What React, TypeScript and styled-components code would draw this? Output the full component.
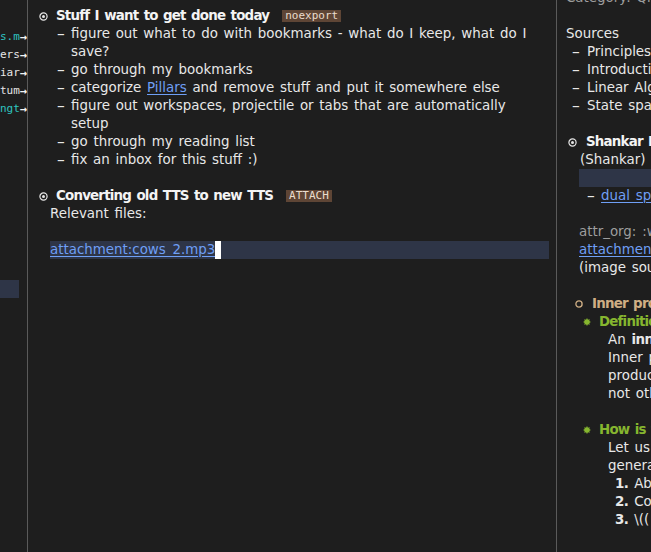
import React from 'react';
import styled, { createGlobalStyle } from 'styled-components';

const GlobalStyle = createGlobalStyle`
  *, *::before, *::after { box-sizing: border-box; }
  html, body { margin: 0; padding: 0; background: #1e1e1e; }
  body { overflow: hidden; }
`;

const Frame = styled.div`
  display: flex;
  width: 651px;
  height: 552px;
  background: #1e1e1e;
  color: #e8e8e8;
  font-family: "DejaVu Sans", "Noto Sans", sans-serif;
  font-size: 13.4px;
  word-spacing: 1.5px;
  overflow: hidden;
`;

/* ---------- left sidebar ---------- */
const Sidebar = styled.div`
  flex: 0 0 28px;
  border-right: 1px solid #5a5a5a;
  padding-top: 28px;
  font-family: "DejaVu Sans Mono", monospace;
  font-size: 11px;
  word-spacing: 0;
  overflow: hidden;
`;

const SideRow = styled.div<{ $selected?: boolean }>`
  display: flex;
  justify-content: flex-end;
  height: 18px;
  line-height: 18px;
  white-space: nowrap;
  width: ${p => (p.$selected ? '19px' : '27px')};
  background: ${p => (p.$selected ? '#2e3547' : 'transparent')};
`;

const SideName = styled.span<{ $color: string }>`
  color: ${p => p.$color};
`;

const SideArrow = styled.span`
  color: #f2f2f2;
  font-weight: bold;
  font-size: 12px;
`;

/* ---------- shared text lines ---------- */
const Line = styled.div<{ $indent?: number; $hl?: boolean; $color?: string; $bold?: boolean }>`
  display: flex;
  align-items: center;
  height: 18px;
  line-height: 18px;
  margin-left: ${p => p.$indent ?? 0}px;
  white-space: nowrap;
  background: ${p => (p.$hl ? '#2e3547' : 'transparent')};
  color: ${p => p.$color ?? 'inherit'};
  font-weight: ${p => (p.$bold ? 'bold' : 'normal')};
  letter-spacing: ${p => (p.$bold ? '-0.8px' : 'normal')};
`;

const BulletBox = styled.span<{ $pad: number }>`
  flex: none;
  width: 20px;
  height: 18px;
  display: flex;
  align-items: center;
  padding-left: ${p => p.$pad}px;
`;

const Tag = styled.span`
  margin-left: 13px;
  height: 12px;
  line-height: 12px;
  padding: 0 3px;
  font-family: "DejaVu Sans Mono", monospace;
  font-size: 11px;
  font-weight: normal;
  letter-spacing: 0;
  background: #5e4535;
  color: #eadccd;
`;

const Link = styled.span`
  color: #6f9ff5;
  text-decoration: underline;
  text-underline-offset: 2px;
`;

const Cursor = styled.span`
  display: inline-block;
  width: 6px;
  height: 18px;
  background: #ffffff;
`;

const Item = styled.div<{ $indent: number }>`
  display: flex;
  margin-left: ${p => p.$indent}px;
  line-height: 18px;
  white-space: nowrap;
`;

const Dash = styled.span<{ $w: number }>`
  flex: none;
  width: ${p => p.$w}px;
  font-size: 15.5px;
  line-height: 18px;
`;

const Strong = styled.span`
  font-weight: bold;
  letter-spacing: -0.5px;
`;

/* ---------- middle editor ---------- */
const Editor = styled.div`
  flex: 0 0 529px;
  border-right: 1px solid #5a5a5a;
  padding: 7px 7px 0 8px;
  overflow: hidden;
`;

/* ---------- right panel ---------- */
const Panel = styled.div`
  flex: 1;
  padding-left: 9px;
  overflow: hidden;
`;

const Scrolled = styled.div`
  margin-top: -11px;
`;

/* ---------- icons ---------- */
const DotCircle = () => (
  <svg width="9" height="9" viewBox="0 0 9 9">
    <circle cx="4.5" cy="4.5" r="3.6" fill="none" stroke="#e6e6e6" strokeWidth="1.2" />
    <circle cx="4.5" cy="4.5" r="1.5" fill="#e6e6e6" />
  </svg>
);

const OpenCircle = ({ color }: { color: string }) => (
  <svg width="8" height="8" viewBox="0 0 8 8">
    <circle cx="4" cy="4" r="3.1" fill="none" stroke={color} strokeWidth="1.3" />
  </svg>
);

const Burst = ({ color }: { color: string }) => {
  const pts: string[] = [];
  for (let i = 0; i < 16; i++) {
    const r = i % 2 === 0 ? 3.9 : 2.5;
    const a = (Math.PI * i) / 8;
    pts.push(`${(4 + r * Math.sin(a)).toFixed(2)},${(4 - r * Math.cos(a)).toFixed(2)}`);
  }
  return (
    <svg width="8" height="8" viewBox="0 0 8 8">
      <polygon points={pts.join(' ')} fill={color} />
    </svg>
  );
};

const TAN = '#cfae84';
const GREEN = '#86b62f';
const GRAY = '#9d9d9d';

export default function App() {
  return (
    <>
      <GlobalStyle />
      <Frame>
        <Sidebar>
          <SideRow><SideName $color="#2fc4c0">bookmarks.m</SideName><SideArrow>→</SideArrow></SideRow>
          <SideRow><SideName $color="#e6e6e6">readers</SideName><SideArrow>→</SideArrow></SideRow>
          <SideRow><SideName $color="#e6e6e6">familiar</SideName><SideArrow>→</SideArrow></SideRow>
          <SideRow><SideName $color="#e6e6e6">quantum</SideName><SideArrow>→</SideArrow></SideRow>
          <SideRow><SideName $color="#2fc4c0">wavelengt</SideName><SideArrow>→</SideArrow></SideRow>
          {Array.from({ length: 9 }).map((_, i) => (
            <SideRow key={i} />
          ))}
          <SideRow $selected />
        </Sidebar>

        <Editor>
          <Line $bold $color="#f4f4f4">
            <BulletBox $pad={3}><DotCircle /></BulletBox>
            Stuff I want to get done today
            <Tag>noexport</Tag>
          </Line>
          <Item $indent={21}>
            <Dash $w={14}>–</Dash>
            <div>figure out what to do with bookmarks - what do I keep, what do I<br />save?</div>
          </Item>
          <Item $indent={21}>
            <Dash $w={14}>–</Dash>
            <div>go through my bookmarks</div>
          </Item>
          <Item $indent={21}>
            <Dash $w={14}>–</Dash>
            <div>categorize <Link>Pillars</Link> and remove stuff and put it somewhere else</div>
          </Item>
          <Item $indent={21}>
            <Dash $w={14}>–</Dash>
            <div>figure out workspaces, projectile or tabs that are automatically<br />setup</div>
          </Item>
          <Item $indent={21}>
            <Dash $w={14}>–</Dash>
            <div>go through my reading list</div>
          </Item>
          <Item $indent={21}>
            <Dash $w={14}>–</Dash>
            <div>fix an inbox for this stuff :)</div>
          </Item>
          <Line />
          <Line $bold $color="#f4f4f4">
            <BulletBox $pad={3}><DotCircle /></BulletBox>
            Converting old TTS to new TTS
            <Tag>ATTACH</Tag>
          </Line>
          <Line $indent={14}>Relevant files:</Line>
          <Line />
          <Line $indent={14} $hl>
            <Link>attachment:cows_2.mp3</Link>
            <Cursor />
          </Line>
        </Editor>

        <Panel>
          <Scrolled>
            <Line $color={GRAY}>Category: Qnotes</Line>
            <Line />
            <Line>Sources</Line>
            <Item $indent={6}><Dash $w={15}>–</Dash><span>Principles of Quantum Mechanics</span></Item>
            <Item $indent={6}><Dash $w={15}>–</Dash><span>Introduction to Linear Algebra</span></Item>
            <Item $indent={6}><Dash $w={15}>–</Dash><span>Linear Algebra Done Right</span></Item>
            <Item $indent={6}><Dash $w={15}>–</Dash><span>State spaces and operators</span></Item>
            <Line />
            <Line $bold $color="#f4f4f4">
              <BulletBox $pad={2}><DotCircle /></BulletBox>
              Shankar Mathematical Introduction
            </Line>
            <Line $indent={14}>(Shankar) chapter 1</Line>
            <Line $indent={13} $hl />
            <Item $indent={21}><Dash $w={14}>–</Dash><Link>dual space</Link></Item>
            <Line />
            <Line $indent={13} $color={GRAY}>attr_org: :width 400</Line>
            <Line $indent={13}><Link>attachment:inner_product.png</Link></Line>
            <Line $indent={13}>(image source: wikipedia)</Line>
            <Line />
            <Line $indent={6} $bold $color={TAN}>
              <BulletBox $pad={3}><OpenCircle color={TAN} /></BulletBox>
              Inner product spaces
            </Line>
            <Line $indent={13} $bold $color={GREEN}>
              <BulletBox $pad={4}><Burst color={GREEN} /></BulletBox>
              Definition
            </Line>
            <Line $indent={42}>An&nbsp;<Strong>inner product</Strong>&nbsp;is a function</Line>
            <Line $indent={42}>Inner product spaces</Line>
            <Line $indent={42}>product of vectors</Line>
            <Line $indent={42}>not otherwise</Line>
            <Line />
            <Line $indent={13} $bold $color={GREEN}>
              <BulletBox $pad={4}><Burst color={GREEN} /></BulletBox>
              How is the inner product
            </Line>
            <Line $indent={42}>Let us consider</Line>
            <Line $indent={42}>generalize</Line>
            <Line $indent={49}><Strong>1.</Strong>&nbsp;Above</Line>
            <Line $indent={49}><Strong>2.</Strong>&nbsp;Components</Line>
            <Line $indent={49}><Strong>3.</Strong>&nbsp;\(( a \)</Line>
          </Scrolled>
        </Panel>
      </Frame>
    </>
  );
}
